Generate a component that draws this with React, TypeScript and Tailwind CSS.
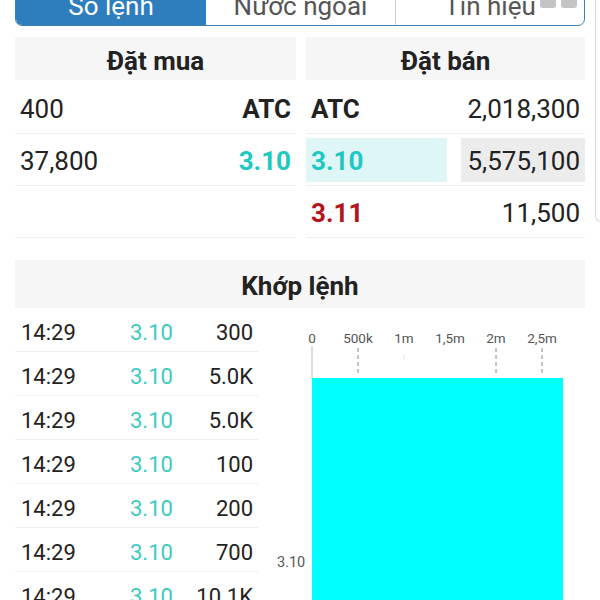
import React from 'react';

const font = { fontFamily: 'Roboto, "Noto Sans", sans-serif' };

const trades = [
  { time: '14:29', price: '3.10', vol: '300' },
  { time: '14:29', price: '3.10', vol: '5.0K' },
  { time: '14:29', price: '3.10', vol: '5.0K' },
  { time: '14:29', price: '3.10', vol: '100' },
  { time: '14:29', price: '3.10', vol: '200' },
  { time: '14:29', price: '3.10', vol: '700' },
  { time: '14:29', price: '3.10', vol: '10.1K' },
];

const ticks = [
  { x: 50, label: '0', dash: false },
  { x: 96, label: '500k', dash: true },
  { x: 142, label: '1m', dash: false },
  { x: 188, label: '1,5m', dash: false },
  { x: 234, label: '2m', dash: true },
  { x: 280, label: '2,5m', dash: true },
];

function VolumeChart() {
  // svg origin sits at page x 262, y 308
  return (
    <svg width="330" height="292" viewBox="0 0 330 292" className="block">
      {ticks.map((t) => (
        <text
          key={t.label}
          x={t.x}
          y={35}
          textAnchor="middle"
          fontSize="13.5"
          fill="#555"
          fontFamily="Roboto, sans-serif"
        >
          {t.label}
        </text>
      ))}
      <line x1={50} y1={38} x2={50} y2={70} stroke="#bbb" strokeWidth="1" />
      {ticks
        .filter((t) => t.dash)
        .map((t) => (
          <line
            key={t.label + 'd'}
            x1={t.x}
            y1={40}
            x2={t.x}
            y2={66}
            stroke="#888"
            strokeWidth="1"
            strokeDasharray="4 3"
          />
        ))}
      <line x1={142} y1={46} x2={142} y2={52} stroke="#e4e4e4" strokeWidth="1" />
      <rect x={50} y={70} width={251} height={222} fill="#00ffff" />
      <text x={15} y={259} fontSize="14.5" fill="#555" fontFamily="Roboto, sans-serif">
        3.10
      </text>
    </svg>
  );
}

export default function App() {
  return (
    <div className="relative w-[600px] h-[600px] overflow-hidden bg-white text-[#222]" style={font}>
      {/* edge of a panel behind */}
      <div className="absolute left-[595px] top-0 h-[222px] w-[10px] border-l border-b border-[#d8d8d8] rounded-bl-[6px]" />
      <div className="absolute left-[540px] top-0 flex gap-[5px]">
        <div className="w-[16px] h-[8px] rounded-b-[3px] bg-[#c4c4c4]" />
        <div className="w-[16px] h-[8px] rounded-b-[3px] bg-[#c4c4c4]" />
      </div>

      <div className="pl-[15px] pr-[15px]">
        {/* Tabs */}
        <div className="h-[26px] overflow-hidden flex flex-col justify-end">
          <div className="h-[44px] flex border border-[#3d7fb5] rounded-b-[7px] overflow-hidden text-[26px] shrink-0">
            <div className="w-[190px] bg-[#2e7dbd] text-white flex items-center justify-center pt-[4px]">Sổ lệnh</div>
            <div className="w-[190px] border-r border-[#cfcfcf] text-[#555] flex items-center justify-center pt-[4px]">Nước ngoài</div>
            <div className="flex-1 text-[#555] flex items-center justify-center pt-[4px]">Tín hiệu</div>
          </div>
        </div>

        {/* Order book */}
        <div className="grid grid-cols-[281px_279px] gap-x-[10px] mt-[11px] text-[26px]">
          <div>
            <div className="h-[43px] bg-[#f6f6f6] flex items-center justify-center pt-[6px] font-bold">Đặt mua</div>
            <div className="mt-[2px] h-[52px] flex items-center justify-between px-[5px] pt-[4px] border-b border-[#efefef]">
              <span>400</span>
              <span className="font-bold">ATC</span>
            </div>
            <div className="h-[52px] flex items-center justify-between px-[5px] pt-[4px] border-b border-[#efefef]">
              <span>37,800</span>
              <span className="font-bold text-[#1fc8c1]">3.10</span>
            </div>
            <div className="h-[52px] border-b border-[#efefef]" />
          </div>
          <div>
            <div className="h-[43px] bg-[#f6f6f6] flex items-center justify-center pt-[6px] font-bold">Đặt bán</div>
            <div className="mt-[2px] h-[52px] flex items-center justify-between px-[5px] pt-[4px] border-b border-[#efefef]">
              <span className="font-bold">ATC</span>
              <span>2,018,300</span>
            </div>
            <div className="h-[52px] flex items-center justify-between border-b border-[#efefef]">
              <div className="w-[141px] h-[44px] bg-[#dff6f7] flex items-center pl-[5px] pt-[4px] font-bold text-[#1fc8c1]">3.10</div>
              <div className="w-[124px] h-[44px] bg-[#ececec] flex items-center justify-end pr-[5px] pt-[4px]">5,575,100</div>
            </div>
            <div className="h-[52px] flex items-center justify-between px-[5px] pt-[4px] border-b border-[#efefef]">
              <span className="font-bold text-[#b3141c]">3.11</span>
              <span>11,500</span>
            </div>
          </div>
        </div>

        {/* Matched orders */}
        <div className="mt-[22px] h-[48px] bg-[#f6f6f6] flex items-center justify-center pt-[4px] font-bold text-[26px]">Khớp lệnh</div>
      </div>

      <div className="flex pl-[15px]">
        <div className="w-[243px] text-[22px]">
          {trades.map((t, i) => (
            <div key={i} className="h-[44px] flex items-center pt-[5px] border-b border-[#efefef]">
              <span className="w-[115px] pl-[6px]">{t.time}</span>
              <span className="flex-1 text-[#3ccac2]">{t.price}</span>
              <span className="pr-[5px]">{t.vol}</span>
            </div>
          ))}
        </div>
        <div className="ml-[4px]">
          <VolumeChart />
        </div>
      </div>
    </div>
  );
}
